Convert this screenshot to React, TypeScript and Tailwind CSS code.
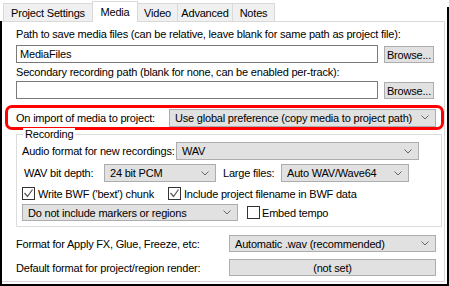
import React from "react"

function Chevron() {
  return (
    <svg width="8" height="5" viewBox="0 0 8 5" className="shrink-0">
      <path d="M0.5 0.5 L4 4 L7.5 0.5" fill="none" stroke="#666" strokeWidth="1" />
    </svg>
  )
}

function Select({ value, className }: { value: string; className: string }) {
  return (
    <div className={`flex shrink-0 items-center justify-between border border-[#adadad] bg-[#e1e1e1] pl-[5px] pr-[6px] ${className}`}>
      <span className="whitespace-nowrap">{value}</span>
      <Chevron />
    </div>
  )
}

function Check({ checked }: { checked?: boolean }) {
  return (
    <span className="flex h-[13px] w-[13px] shrink-0 items-center justify-center border border-[#333] bg-white">
      {checked && (
        <svg width="11" height="11" viewBox="0 0 11 11">
          <path d="M1.5 5 L4.5 8.5 L9.5 1.5" fill="none" stroke="#555" strokeWidth="1.2" />
        </svg>
      )}
    </span>
  )
}

function Browse() {
  return (
    <button className="mt-px flex h-[17px] w-[50px] shrink-0 items-center justify-center border border-[#adadad] bg-[#e1e1e1]">
      Browse...
    </button>
  )
}

const tabs = [
  { label: "Project Settings", cls: "ml-[3px] w-[89px] border-l" },
  { label: "Media", cls: "w-[46px] border-x", active: true },
  { label: "Video", cls: "w-[39px]" },
  { label: "Advanced", cls: "w-[55px] border-l" },
  { label: "Notes", cls: "w-[43px] border-x" },
]

export default function App() {
  return (
    <div className="flex h-[286px] w-[449px] flex-col overflow-hidden bg-white font-['Liberation_Sans',sans-serif] text-[11px] leading-[12px] tracking-[-0.2px] text-black">
      {/* Tabs */}
      <div className="flex h-[21px] shrink-0 items-end">
        {tabs.map((t) =>
          t.active ? (
            <div
              key={t.label}
              className={`relative z-10 -mb-px flex h-[21px] items-start justify-center border-t border-[#d9d9d9] bg-white pt-[4px] ${t.cls}`}
            >
              {t.label}
            </div>
          ) : (
            <div
              key={t.label}
              className={`flex h-[18px] items-center justify-center border-t border-[#d9d9d9] bg-[#f0f0f0] ${t.cls}`}
            >
              {t.label}
            </div>
          )
        )}
        <div className="h-[14px] flex-1 border-r-2 border-black" />
      </div>

      {/* Panel */}
      <div className="flex flex-1 flex-col border-x-2 border-b-2 border-black">
        <div className="mb-[2px] mr-[2px] flex flex-1 flex-col border-y border-r border-[#d9d9d9]">
          <div className="flex h-[23px] items-center pl-[14px]">
            Path to save media files (can be relative, leave blank for same path as project file):
          </div>
          <div className="flex items-start gap-[6px] pl-[14px]">
            <div className="flex h-[18px] w-[362px] items-center border border-[#7a7a7a] bg-white px-[3px]">MediaFiles</div>
            <Browse />
          </div>
          <div className="flex h-[18px] items-center pl-[14px]">
            Secondary recording path (blank for none, can be enabled per-track):
          </div>
          <div className="flex items-start gap-[6px] pl-[14px]">
            <div className="h-[18px] w-[362px] border border-[#7a7a7a] bg-white" />
            <Browse />
          </div>

          {/* Highlighted import option */}
          <div className="ml-[3px] mt-[6px] flex h-[25px] w-[439px] items-center rounded-[7px] border-[3px] border-[#ff0000] pl-[8px] pr-[5px]">
            <span className="whitespace-nowrap">On import of media to project:</span>
            <Select value="Use global preference (copy media to project path)" className="ml-auto h-[18px] w-[267px]" />
          </div>

          {/* Recording group */}
          <div className="relative ml-[14px] mt-[4px] w-[426px] border border-[#dcdcdc] pb-[5px]">
            <span className="absolute -top-[7px] left-[6px] bg-white px-[2px]">Recording</span>
            <div className="mt-[7px] flex items-center pl-[5px]">
              <span className="w-[154px] whitespace-nowrap">Audio format for new recordings:</span>
              <Select value="WAV" className="h-[18px] w-[243px]" />
            </div>
            <div className="mt-[4px] flex items-center pl-[7px]">
              <span className="w-[80px] whitespace-nowrap">WAV bit depth:</span>
              <Select value="24 bit PCM" className="h-[18px] w-[112px]" />
              <span className="ml-[7px] w-[58px] whitespace-nowrap">Large files:</span>
              <Select value="Auto WAV/Wave64" className="h-[18px] w-[128px]" />
            </div>
            <div className="mt-[5px] flex h-[13px] items-center pl-[5px]">
              <Check checked />
              <span className="ml-[3px] w-[130px] whitespace-nowrap">Write BWF ('bext') chunk</span>
              <Check checked />
              <span className="ml-[3px] whitespace-nowrap">Include project filename in BWF data</span>
            </div>
            <div className="mt-[4px] flex items-center pl-[5px]">
              <Select value="Do not include markers or regions" className="h-[17px] w-[216px]" />
              <span className="ml-[9px]">
                <Check />
              </span>
              <span className="ml-[2px] whitespace-nowrap">Embed tempo</span>
            </div>
          </div>

          <div className="mt-[8px] flex items-center pl-[14px]">
            <span className="w-[213px] whitespace-nowrap">Format for Apply FX, Glue, Freeze, etc:</span>
            <Select value="Automatic .wav (recommended)" className="h-[17px] w-[207px]" />
          </div>
          <div className="mt-[7px] flex items-center pl-[14px]">
            <span className="w-[213px] whitespace-nowrap">Default format for project/region render:</span>
            <button className="flex h-[17px] w-[207px] items-center justify-center border border-[#adadad] bg-[#e1e1e1]">
              (not set)
            </button>
          </div>
        </div>
      </div>
    </div>
  )
}
